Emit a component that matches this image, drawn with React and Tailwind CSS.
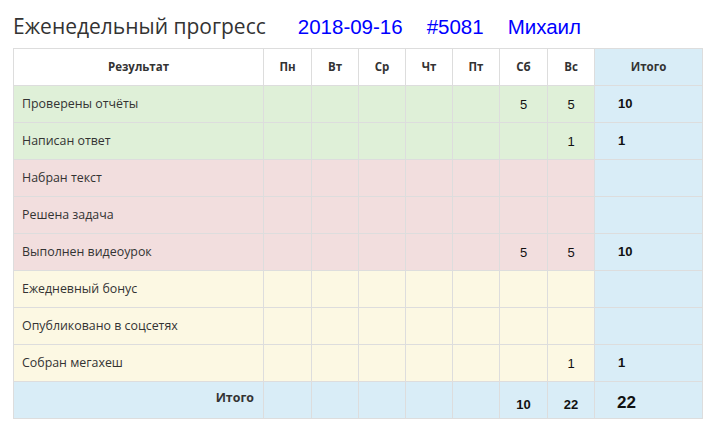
import React from "react";

const days = ["Пн", "Вт", "Ср", "Чт", "Пт", "Сб", "Вс"];

const rows = [
  { name: "Проверены отчёты", tone: "bg-[#dff0d8]", vals: ["", "", "", "", "", "5", "5"], total: "10" },
  { name: "Написан ответ", tone: "bg-[#dff0d8]", vals: ["", "", "", "", "", "", "1"], total: "1" },
  { name: "Набран текст", tone: "bg-[#f2dede]", vals: ["", "", "", "", "", "", ""], total: "" },
  { name: "Решена задача", tone: "bg-[#f2dede]", vals: ["", "", "", "", "", "", ""], total: "" },
  { name: "Выполнен видеоурок", tone: "bg-[#f2dede]", vals: ["", "", "", "", "", "5", "5"], total: "10" },
  { name: "Ежедневный бонус", tone: "bg-[#fcf8e3]", vals: ["", "", "", "", "", "", ""], total: "" },
  { name: "Опубликовано в соцсетях", tone: "bg-[#fcf8e3]", vals: ["", "", "", "", "", "", ""], total: "" },
  { name: "Собран мегахеш", tone: "bg-[#fcf8e3]", vals: ["", "", "", "", "", "", "1"], total: "1" },
];

const dayWidths = ["w-[48px]", "w-[47px]", "w-[47px]", "w-[47px]", "w-[47px]", "w-[48px]", "w-[47px]"];

export default function App() {
  return (
    <div className="w-[722px] h-[429px] bg-white px-[13px] pt-[12px] font-['Open_Sans',sans-serif] text-[#333]">
      <div className="flex items-baseline h-[36px]">
        <h1 className="text-[21px] leading-[26px] text-[#333]">Еженедельный прогресс</h1>
        <div className="ml-[32px] flex gap-[24px] font-['Liberation_Sans',Arial,sans-serif] text-[20.5px] text-[#0000ff]">
          <span>2018-09-16</span>
          <span>#5081</span>
          <span>Михаил</span>
        </div>
      </div>
      <table className="w-[690px] border-collapse table-fixed text-[12.4px]">
        <thead>
          <tr className="h-[37px]">
            <th className="w-[250px] border border-[#ddd] text-[11.5px] font-bold">Результат</th>
            {days.map((d, i) => (
              <th key={d} className={`${dayWidths[i]} border border-[#ddd] text-[11.5px] font-bold`}>
                {d}
              </th>
            ))}
            <th className="border border-[#ddd] bg-[#d9edf7] text-[11.5px] font-bold">Итого</th>
          </tr>
        </thead>
        <tbody>
          {rows.map((r) => (
            <tr key={r.name} className={`h-[37px] ${r.tone}`}>
              <td className="border border-[#ddd] pl-[8px]">{r.name}</td>
              {r.vals.map((v, i) => (
                <td key={i} className="border border-[#ddd] text-center font-['Liberation_Sans',Arial,sans-serif] text-[13px] text-[#111] pt-[2px]">
                  {v}
                </td>
              ))}
              <td className="border border-[#ddd] bg-[#d9edf7] pl-[23px] font-['Liberation_Sans',Arial,sans-serif] text-[13px] font-bold text-[#111]">
                {r.total}
              </td>
            </tr>
          ))}
          <tr className="h-[37px] bg-[#d9edf7]">
            <td className="border border-[#ddd] pr-[9px] pb-[4px] text-right font-bold">Итого</td>
            {["", "", "", "", "", "10", "22"].map((v, i) => (
              <td key={i} className="border border-[#ddd] pt-[10px] text-center font-['Liberation_Sans',Arial,sans-serif] text-[13px] font-bold text-[#111]">
                {v}
              </td>
            ))}
            <td className="border border-[#ddd] pl-[22px] pt-[6px] font-['Liberation_Sans',Arial,sans-serif] text-[17px] font-bold text-[#111]">
              22
            </td>
          </tr>
        </tbody>
      </table>
    </div>
  );
}
